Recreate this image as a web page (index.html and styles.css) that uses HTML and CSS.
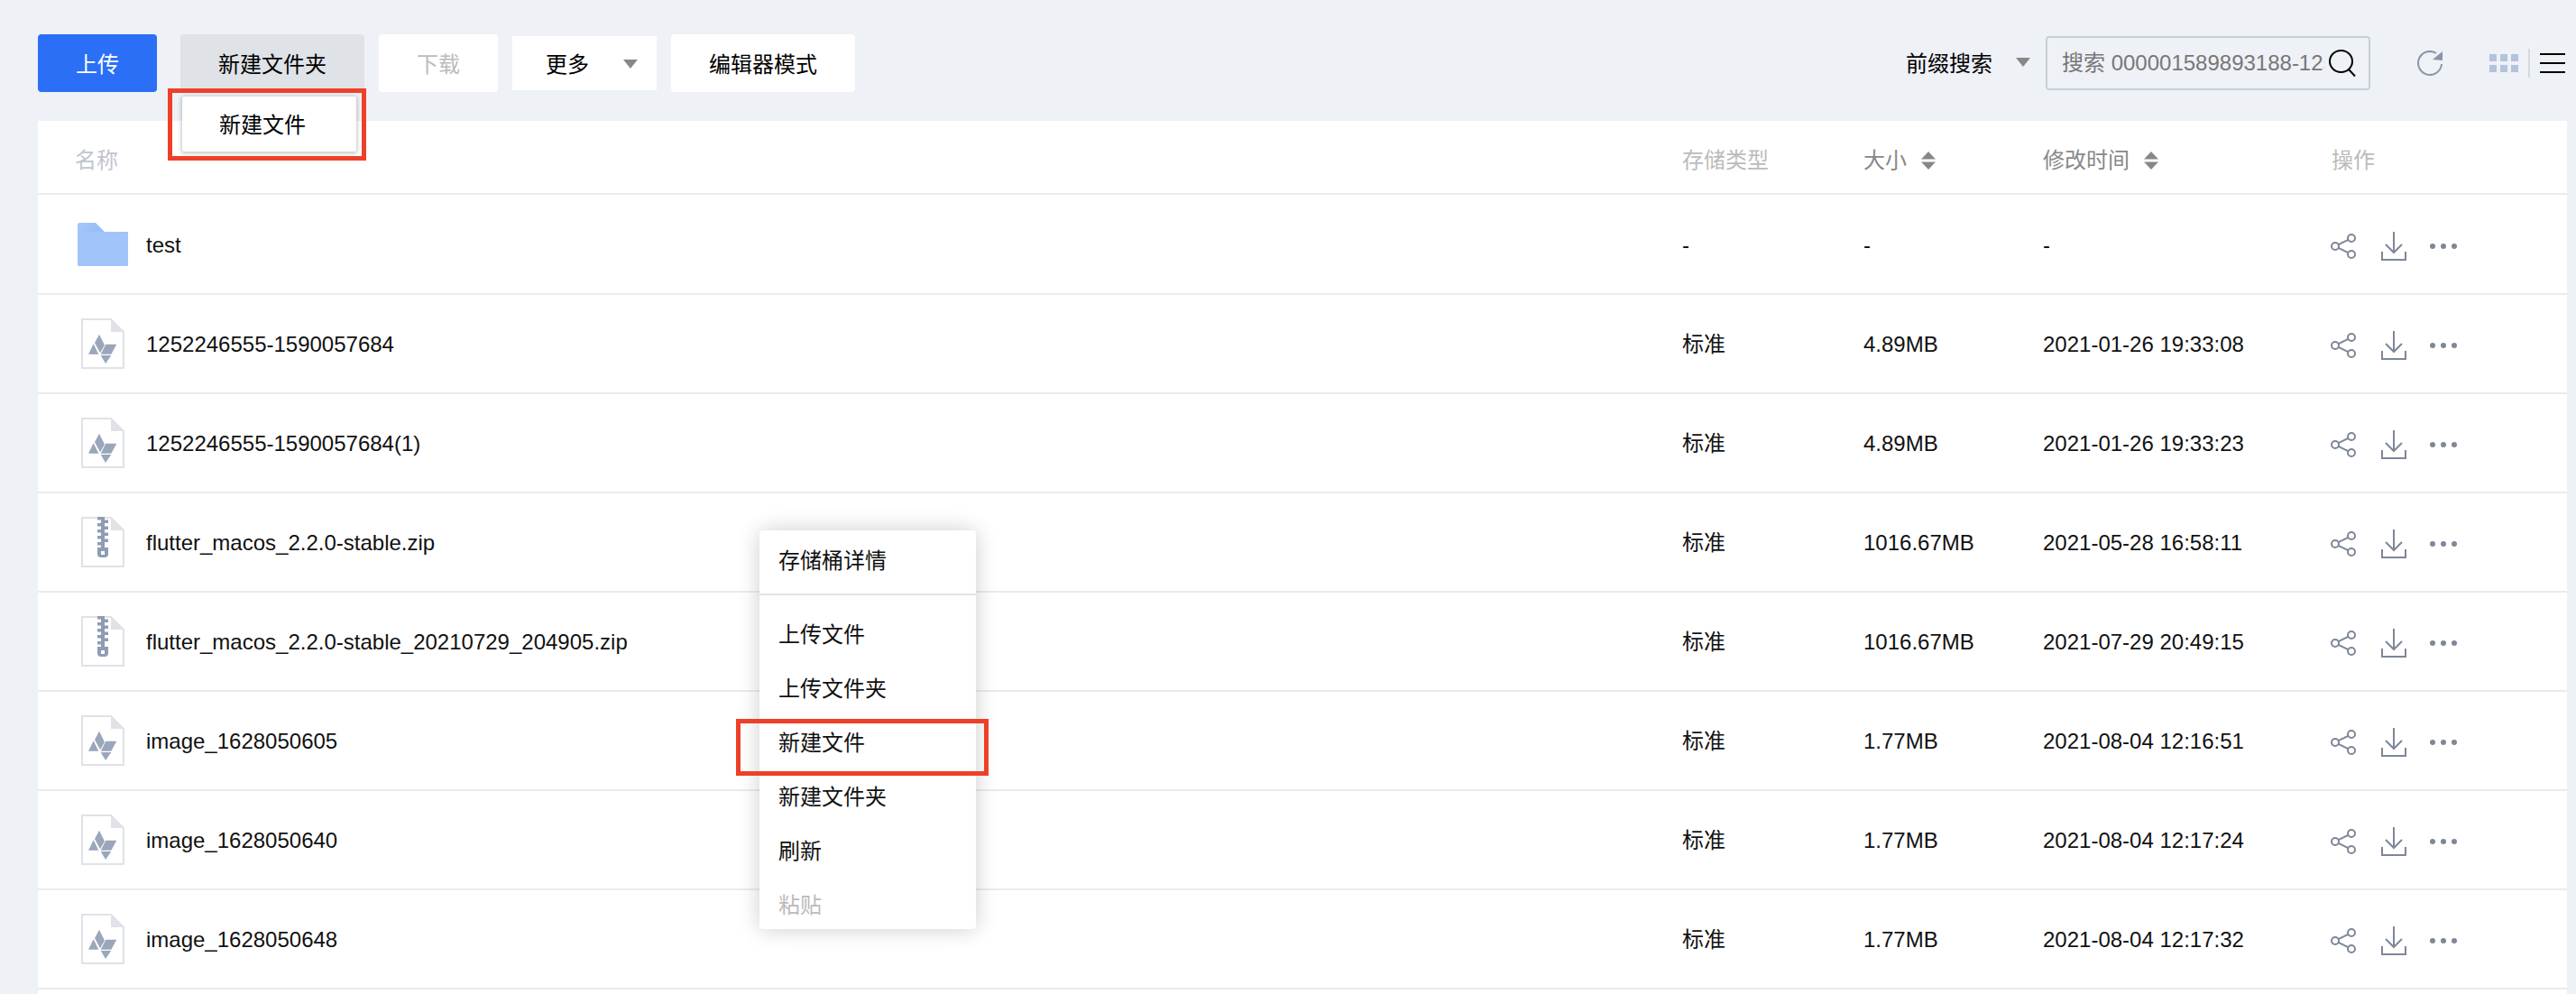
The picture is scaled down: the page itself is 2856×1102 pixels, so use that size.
FILE: index.html
```html
<!DOCTYPE html>
<html lang="zh">
<head>
<meta charset="utf-8">
<title>文件列表</title>
<link rel="stylesheet" href="styles.css">
</head>
<body>
<svg class="defs" width="0" height="0">
  <defs>
    <linearGradient id="tabg" x1="0" y1="0" x2="1" y2="0.6">
      <stop offset="0" stop-color="#a6c8fb"/><stop offset="1" stop-color="#7fadfa"/>
    </linearGradient>
    <symbol id="i-folder" viewBox="0 0 56 48">
      <path d="M2 0H20L30 10H56V46a2 2 0 0 1-2 2H2a2 2 0 0 1-2-2V2a2 2 0 0 1 2-2Z" fill="url(#tabg)"/>
      <path d="M2 10H54a2 2 0 0 1 2 2V46a2 2 0 0 1-2 2H2a2 2 0 0 1-2-2V10Z" fill="#a1c5fb"/>
    </symbol>
    <symbol id="i-image" viewBox="0 0 48 56">
      <path d="M1 1H33L47 15V55H1Z" fill="#fff" stroke="#e0e2e8" stroke-width="2"/>
      <path d="M33 1L47 15H33Z" fill="#e0e2e8"/>
      <g fill="#9aa6b9">
        <path d="M20 17.7L26 29.7 21 38.3 15 27Z"/>
        <path d="M13.7 28.3L19.3 39.7H8Z"/>
        <path d="M27.3 28.7H39.3L33.3 39.7H21.700Z"/>
        <path d="M21.700 41H33.3L27 50Z"/>
      </g>
    </symbol>
    <symbol id="i-zip" viewBox="0 0 48 56">
      <path d="M1 1H33L47 15V55H1Z" fill="#fff" stroke="#e0e2e8" stroke-width="2"/>
      <path d="M33 1L47 15H33Z" fill="#e0e2e8"/>
      <g fill="#8f9cb3">
        <rect x="22" y="0" width="4" height="34"/>
        <rect x="18" y="0" width="4" height="3.500"/>
        <rect x="18" y="7" width="4" height="3.500"/>
        <rect x="18" y="14" width="4" height="3.500"/>
        <rect x="18" y="21" width="4" height="3.500"/>
        <rect x="18" y="28" width="4" height="3.500"/>
        <rect x="26" y="3.500" width="4" height="3.500"/>
        <rect x="26" y="10.500" width="4" height="3.500"/>
        <rect x="26" y="17.500" width="4" height="3.500"/>
        <rect x="26" y="24.500" width="4" height="3.500"/>
        <path d="M18 34H30V41a4 4 0 0 1-4 4H22a4 4 0 0 1-4-4Z"/>
      </g>
      <rect x="22" y="38" width="4" height="4" fill="#fff"/>
    </symbol>
    <symbol id="i-share" viewBox="0 0 28 28">
      <g fill="none" stroke="#7d8799" stroke-width="2">
        <circle cx="5" cy="14" r="4"/><circle cx="23" cy="5" r="4"/><circle cx="23" cy="23" r="4"/>
        <path d="M8.600 12.200L19.400 6.800M8.600 15.800L19.400 21.200"/>
      </g>
    </symbol>
    <symbol id="i-down" viewBox="0 0 28 32">
      <g fill="none" stroke="#7d8799" stroke-width="2">
        <path d="M14 0V22M5 14L14 23 23 14"/>
        <path d="M1 22V31H27V22"/>
      </g>
    </symbol>
    <symbol id="i-dots" viewBox="0 0 32 6">
      <g fill="#7d8799"><circle cx="3" cy="3" r="3"/><circle cx="15" cy="3" r="3"/><circle cx="27" cy="3" r="3"/></g>
    </symbol>
    <symbol id="i-sort" viewBox="0 0 16 20">
      <path d="M8 0L16 8.500H0ZM8 20L0 11.500H16Z" fill="#888"/>
    </symbol>
  </defs>
</svg>

<div class="page">
  <header class="toolbar">
    <button class="btn btn-primary">上传</button>
    <div class="new-wrap">
      <button class="btn btn-wide btn-active">新建文件夹</button>
      <div class="mini-menu">新建文件</div>
      <div class="mark mark-mini"></div>
    </div>
    <button class="btn btn-disabled">下载</button>
    <div class="more"><span class="more-label">更多</span><span class="caret"></span></div>
    <button class="btn btn-wide">编辑器模式</button>
    <div class="tools">
      <span class="prefix">前缀搜索</span><span class="caret caret-prefix"></span>
      <div class="search">
        <span class="search-text">搜索 000001589893188-1252246555</span>
        <svg class="search-icon" width="30" height="30" viewBox="0 0 30 30"><g fill="none" stroke="#000" stroke-width="2"><ellipse cx="13.500" cy="13" rx="12.500" ry="12"/><path d="M22 22L29 29.500"/></g></svg>
      </div>
      <svg class="refresh" width="28" height="28" viewBox="0 0 28 28"><path d="M27 15A13 13 0 1 1 21 3" fill="none" stroke="#8a94a6" stroke-width="2"/><path d="M28 1V11L17 10Z" fill="#8a94a6"/></svg>
      <div class="grid-view"><i></i><i></i><i></i><i></i><i></i><i></i></div>
      <span class="divider"></span>
      <div class="list-view"><i></i><i></i><i></i></div>
    </div>
  </header>

  <main class="table">
    <div class="row row-head">
      <div class="c-name c-name-head">名称</div>
      <div class="c-type head-light">存储类型</div>
      <div class="c-size head-sort">大小<svg class="sort" width="16" height="20"><use href="#i-sort"/></svg></div>
      <div class="c-time head-sort">修改时间<svg class="sort" width="16" height="20"><use href="#i-sort"/></svg></div>
      <div class="c-ops head-light">操作</div>
    </div>
    <div class="rows">
      <div class="row">
        <div class="c-name"><span class="ficon"><svg class="folder" width="56" height="48"><use href="#i-folder"/></svg></span>test</div>
        <div class="c-type">-</div><div class="c-size">-</div><div class="c-time">-</div>
        <div class="c-ops"><svg width="28" height="28"><use href="#i-share"/></svg><svg width="28" height="32"><use href="#i-down"/></svg><svg width="32" height="6"><use href="#i-dots"/></svg></div>
      </div>
      <div class="row">
        <div class="c-name"><span class="ficon"><svg width="48" height="56"><use href="#i-image"/></svg></span>1252246555-1590057684</div>
        <div class="c-type">标准</div><div class="c-size">4.89MB</div><div class="c-time">2021-01-26 19:33:08</div>
        <div class="c-ops"><svg width="28" height="28"><use href="#i-share"/></svg><svg width="28" height="32"><use href="#i-down"/></svg><svg width="32" height="6"><use href="#i-dots"/></svg></div>
      </div>
      <div class="row">
        <div class="c-name"><span class="ficon"><svg width="48" height="56"><use href="#i-image"/></svg></span>1252246555-1590057684(1)</div>
        <div class="c-type">标准</div><div class="c-size">4.89MB</div><div class="c-time">2021-01-26 19:33:23</div>
        <div class="c-ops"><svg width="28" height="28"><use href="#i-share"/></svg><svg width="28" height="32"><use href="#i-down"/></svg><svg width="32" height="6"><use href="#i-dots"/></svg></div>
      </div>
      <div class="row">
        <div class="c-name"><span class="ficon"><svg width="48" height="56"><use href="#i-zip"/></svg></span>flutter_macos_2.2.0-stable.zip</div>
        <div class="c-type">标准</div><div class="c-size">1016.67MB</div><div class="c-time">2021-05-28 16:58:11</div>
        <div class="c-ops"><svg width="28" height="28"><use href="#i-share"/></svg><svg width="28" height="32"><use href="#i-down"/></svg><svg width="32" height="6"><use href="#i-dots"/></svg></div>
      </div>
      <div class="row">
        <div class="c-name"><span class="ficon"><svg width="48" height="56"><use href="#i-zip"/></svg></span>flutter_macos_2.2.0-stable_20210729_204905.zip</div>
        <div class="c-type">标准</div><div class="c-size">1016.67MB</div><div class="c-time">2021-07-29 20:49:15</div>
        <div class="c-ops"><svg width="28" height="28"><use href="#i-share"/></svg><svg width="28" height="32"><use href="#i-down"/></svg><svg width="32" height="6"><use href="#i-dots"/></svg></div>
      </div>
      <div class="row">
        <div class="c-name"><span class="ficon"><svg width="48" height="56"><use href="#i-image"/></svg></span>image_1628050605</div>
        <div class="c-type">标准</div><div class="c-size">1.77MB</div><div class="c-time">2021-08-04 12:16:51</div>
        <div class="c-ops"><svg width="28" height="28"><use href="#i-share"/></svg><svg width="28" height="32"><use href="#i-down"/></svg><svg width="32" height="6"><use href="#i-dots"/></svg></div>
      </div>
      <div class="row">
        <div class="c-name"><span class="ficon"><svg width="48" height="56"><use href="#i-image"/></svg></span>image_1628050640</div>
        <div class="c-type">标准</div><div class="c-size">1.77MB</div><div class="c-time">2021-08-04 12:17:24</div>
        <div class="c-ops"><svg width="28" height="28"><use href="#i-share"/></svg><svg width="28" height="32"><use href="#i-down"/></svg><svg width="32" height="6"><use href="#i-dots"/></svg></div>
      </div>
      <div class="row">
        <div class="c-name"><span class="ficon"><svg width="48" height="56"><use href="#i-image"/></svg></span>image_1628050648</div>
        <div class="c-type">标准</div><div class="c-size">1.77MB</div><div class="c-time">2021-08-04 12:17:32</div>
        <div class="c-ops"><svg width="28" height="28"><use href="#i-share"/></svg><svg width="28" height="32"><use href="#i-down"/></svg><svg width="32" height="6"><use href="#i-dots"/></svg></div>
      </div>
    </div>
  </main>
</div>

<nav class="context">
  <div class="ctx-item ctx-first">存储桶详情</div>
  <div class="ctx-group">
    <div class="ctx-item">上传文件</div>
    <div class="ctx-item">上传文件夹</div>
    <div class="ctx-item">新建文件</div>
    <div class="ctx-item">新建文件夹</div>
    <div class="ctx-item">刷新</div>
    <div class="ctx-item ctx-disabled">粘贴</div>
  </div>
</nav>
<div class="mark mark-ctx"></div>
</body>
</html>
```

FILE: styles.css
```css
* { box-sizing: border-box; }
html, body { margin: 0; height: 100%; }
body {
  background: #eef1f6;
  color: #000;
  font: 24px/32px "Liberation Sans", "Noto Sans CJK SC", sans-serif;
  overflow: hidden;
  position: relative;
}
.defs { position: absolute; }
.page {
  height: 100vh;
  display: flex;
  flex-direction: column;
  padding: 38px 10px 0 42px;
}
.toolbar {
  display: flex;
  align-items: center;
  gap: 16px;
  height: 64px;
  margin-bottom: 32px;
  flex: none;
}
.btn {
  width: 132px;
  height: 64px;
  border: 0;
  border-radius: 4px;
  background: #fff;
  color: #000;
  font: inherit;
  padding: 3px 0 0;
}
.btn-wide { width: 204px; }
.btn-primary { background: #2a6ff6; color: #fff; margin-right: 10px; }
.btn-active { background: #dfe2e7; }
.btn-disabled { color: #bbb; }
.new-wrap { position: relative; height: 64px; }
.mini-menu {
  position: absolute;
  left: 2px;
  top: 69px;
  width: 193px;
  height: 61px;
  background: #fff;
  border-radius: 2px;
  box-shadow: 0 1px 4px 1px rgba(0, 0, 0, .24);
  padding-left: 41px;
  line-height: 63px;
  z-index: 3;
}
.mark { position: absolute; border: 5px solid #ee4028; z-index: 5; pointer-events: none; }
.mark-mini { left: -14px; top: 60px; width: 220px; height: 80px; }
.more {
  width: 160px;
  height: 60px;
  background: #fff;
  display: flex;
  align-items: center;
  padding-left: 37px;
  position: relative;
}
.more-label { padding-top: 3px; }
.caret {
  width: 0;
  height: 0;
  border: solid transparent;
  border-width: 10px 8px 0;
  border-top-color: #888;
  margin-left: 38px;
  margin-top: 2px;
}
.tools { margin-left: auto; display: flex; align-items: center; height: 64px; }
.prefix { width: 96px; flex: none; white-space: nowrap; padding-top: 2px; }
.caret-prefix { margin: -2px 0 0 26px; flex: none; }
.search {
  width: 360px;
  height: 60px;
  margin-left: 17px;
  border: 2px solid #c9ced9;
  border-radius: 4px;
  display: flex;
  align-items: center;
  padding: 0 13px 0 16px;
  flex: none;
}
.search-text {
  width: 291px;
  flex: none;
  overflow: hidden;
  white-space: nowrap;
  color: #777;
}
.search-icon { margin-left: 5px; flex: none; }
.refresh { margin-left: 52px; flex: none; }
.grid-view {
  margin-left: 52px;
  display: grid;
  grid-template-columns: repeat(3, 8px);
  grid-auto-rows: 8px;
  gap: 4px 4px;
  flex: none;
}
.grid-view i { background: #b4c3da; }
.divider { width: 2px; height: 32px; background: #d5d9e0; margin-left: 11px; flex: none; }
.list-view {
  margin: 0 2px 0 11px;
  width: 28px;
  height: 22px;
  display: flex;
  flex-direction: column;
  justify-content: space-between;
  flex: none;
}
.list-view i { display: block; height: 2px; background: #000; }

.table { flex: 1; background: #fff; min-height: 0; }
.row {
  display: flex;
  align-items: center;
  height: 110px;
  border-bottom: 2px solid #e9ebf0;
  color: #111;
}
.row-head { height: 82px; padding-top: 8px; border-bottom-color: #e9ebf0; color: #888; }
.rows { padding-top: 1px; }
.c-name { width: 1823px; display: flex; align-items: center; padding: 2px 0 0 48px; flex: none; }
.c-name-head { padding: 0 0 0 41px; color: #c0c5cf; }
.ficon { width: 72px; display: flex; align-items: center; flex: none; margin-top: -2px; }
.ficon .folder { margin-left: -4px; }
.c-type { width: 201px; flex: none; padding-top: 2px; }
.c-size { width: 199px; flex: none; padding-top: 2px; }
.c-time { width: 321px; flex: none; padding-top: 2px; }
.row-head .c-type, .row-head .c-size, .row-head .c-time { padding-top: 0; }
.head-light { color: #bbb; }
.head-sort { display: flex; align-items: center; }
.sort { margin-left: 16px; }
.c-ops { flex: 1; display: flex; align-items: center; gap: 28px; margin-left: -2px; padding-top: 4px; }
.row-head .c-ops { margin-left: -1px; padding-top: 0; }
.c-ops svg:last-child { margin-left: -2px; }

.context {
  position: absolute;
  left: 842px;
  top: 588px;
  width: 240px;
  height: 442px;
  background: #fff;
  border-radius: 4px;
  box-shadow: 0 0 24px rgba(0, 0, 0, .2);
  z-index: 4;
}
.ctx-item { height: 60px; line-height: 62px; padding-left: 21px; color: #111; }
.ctx-first { height: 72px; line-height: 68px; border-bottom: 2px solid #e2e3e6; }
.ctx-group { padding-top: 13px; }
.ctx-disabled { color: #bbb; }
.mark-ctx { left: 816px; top: 797px; width: 280px; height: 63px; }
```
